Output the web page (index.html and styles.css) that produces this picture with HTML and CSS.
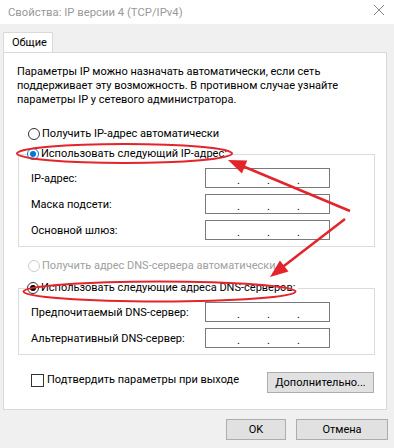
FILE: index.html
```html
<!DOCTYPE html>
<html lang="ru">
<head>
    <meta charset="UTF-8">
    <title>Свойства: IP версии 4 (TCP/IPv4)</title>
    <link rel="stylesheet" href="styles.css">
</head>
<body>
    <div class="window">
        <div class="titlebar">
            <span class="title">Свойства: IP версии 4 (TCP/IPv4)</span>
            <svg class="close" width="12" height="12" viewBox="0 0 12 12">
                <path d="M1 1 L11 11 M11 1 L1 11" stroke="#8a8a8a" stroke-width="1" fill="none"/>
            </svg>
        </div>

        <div class="tabs">
            <div class="tab">Общие</div>
        </div>

        <div class="panel">
            <p class="intro">Параметры IP можно назначать автоматически, если сеть<br>поддерживает эту возможность. В противном случае узнайте<br>параметры IP у сетевого администратора.</p>

            <div class="option first">
                <span class="radio"></span>Получить IP-адрес автоматически
            </div>

            <fieldset class="group">
                <legend class="option">
                    <span class="radio checked focus"></span>Использовать следующий IP-адрес:
                </legend>
                <div class="row"><span>IP-адрес:</span><div class="ip"><i>.</i><i>.</i><i>.</i></div></div>
                <div class="row"><span>Маска подсети:</span><div class="ip"><i>.</i><i>.</i><i>.</i></div></div>
                <div class="row"><span>Основной шлюз:</span><div class="ip"><i>.</i><i>.</i><i>.</i></div></div>
            </fieldset>

            <div class="option disabled dns-auto">
                <span class="radio"></span>Получить адрес DNS-сервера автоматически
            </div>

            <fieldset class="group dns">
                <legend class="option">
                    <span class="radio checked"></span>Использовать следующие адреса DNS-серверов:
                </legend>
                <div class="row"><span>Предпочитаемый DNS-сервер:</span><div class="ip"><i>.</i><i>.</i><i>.</i></div></div>
                <div class="row"><span>Альтернативный DNS-сервер:</span><div class="ip"><i>.</i><i>.</i><i>.</i></div></div>
            </fieldset>

            <div class="bottom">
                <label class="check"><span class="box"></span>Подтвердить параметры при выходе</label>
                <button class="btn more">Дополнительно...</button>
            </div>
        </div>

        <div class="footer">
            <button class="btn ok">OK</button>
            <button class="btn cancel">Отмена</button>
        </div>

        <!-- red marks drawn on top of the dialog -->
        <svg class="marks" width="394" height="448" viewBox="0 0 394 448">
            <g fill="none" stroke="#e3242b" stroke-width="2">
                <ellipse cx="124.5" cy="153.5" rx="107.5" ry="9.5"/>
                <ellipse cx="159.5" cy="291.5" rx="136" ry="10"/>
                <line x1="350" y1="211" x2="240" y2="165" stroke-width="2.5"/>
                <line x1="345" y1="219" x2="280" y2="269" stroke-width="2.5"/>
            </g>
            <g fill="#e3242b">
                <polygon points="228,160 247.3,160.4 241.9,173.4"/>
                <polygon points="270,277 279.9,260.5 288.5,271.5"/>
            </g>
        </svg>
    </div>
</body>
</html>
```

FILE: styles.css
```css
body { margin: 0; background-color: #f0f0f0; font-family: Roboto, "Noto Sans", Arial, sans-serif; font-size: 11px; color: #000; }
.window { position: relative; width: 394px; height: 448px; overflow: hidden; }

.titlebar { height: 24px; background-color: #fff; display: flex; align-items: center; justify-content: space-between; padding: 0 9px 0 8px; }
.title { color: #999; font-size: 11.3px; }
.close { margin-top: -4px; }

.tabs { display: flex; margin: 8px 0 0 3px; }
.tab {
    width: 50px;
    height: 20px;
    line-height: 20px;
    padding-left: 8px;
    box-sizing: border-box;
    background-color: #fff;
    border: 1px solid #d9d9d9;
    border-bottom: none;
}

.panel {
    margin-left: 3px;
    width: 384px;
    height: 358px;
    box-sizing: border-box;
    background-color: #fff;
    border: 1px solid #d9d9d9;
    padding: 12px 0 0 0;
}

.intro { margin: 0 0 0 13px; line-height: 14px; white-space: nowrap; }

.option { display: flex; align-items: center; height: 16px; line-height: 16px; white-space: nowrap; }
.option.first { margin: 19px 0 0 24px; }
.option.disabled { color: #a0a0a0; }
.dns-auto { margin: 11px 0 0 24px; }

.radio {
    width: 12px;
    height: 12px;
    box-sizing: border-box;
    border: 1px solid #333;
    border-radius: 50%;
    margin-right: 2px;
    display: flex;
    align-items: center;
    justify-content: center;
}
.disabled .radio { border-color: #ccc; }
.radio.checked::after { content: ""; width: 6px; height: 6px; border-radius: 50%; background-color: #000; }
.radio.focus { border-color: #0078d7; }
.radio.focus::after { background-color: #0078d7; }

.group {
    margin: 4px 11px 0 14px;
    padding: 0 0 6px 12px;
    border: 1px solid #dcdcdc;
    min-width: 0;
}
.group.dns { margin-top: 6px; }
.group legend { margin-left: -4px; padding: 0 3px 0 0; }

.row { display: grid; grid-template-columns: 174px 125px; align-items: center; margin-top: 6px; white-space: nowrap; }
.ip {
    height: 20px;
    box-sizing: border-box;
    border: 1px solid #7a7a7a;
    display: flex;
    padding-left: 31px;
    line-height: 24px;
}
.ip i { font-style: normal; width: 30px; }

.bottom { display: flex; justify-content: space-between; align-items: flex-start; margin: 17px 12px 0 27px; }
.check { display: flex; align-items: center; margin-top: 1px; line-height: 14px; }
.box { width: 13px; height: 13px; box-sizing: border-box; border: 1px solid #333; margin-right: 3px; }

.btn {
    font-family: inherit;
    font-size: 11px;
    height: 21px;
    padding: 0;
    background-color: #e1e1e1;
    border: 1px solid #adadad;
    color: #000;
}
.more { width: 107px; }

.footer { display: flex; justify-content: flex-end; gap: 10px; margin: 9px 6px 0 0; }
.ok { width: 60px; }
.cancel { width: 92px; }

.marks { position: absolute; left: 0; top: 0; pointer-events: none; }
```
